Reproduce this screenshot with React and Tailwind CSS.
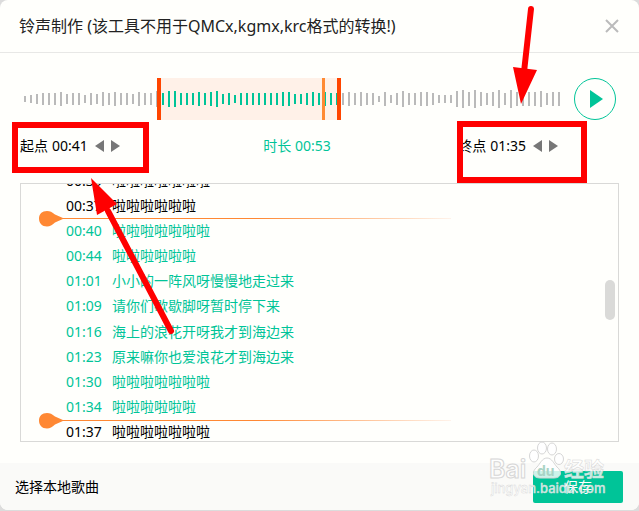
import React, { useState } from 'react';

const BARS = [
  6, 8, 10, 12, 12, 12, 14, 10, 12, 12, 8, 12, 10, 14, 12, 14, 12, 12, 10, 14, 12, 12, 16, 12, 16, 16, 12, 12, 12, 14,
  12, 14, 16, 10, 12, 8, 12, 12, 12, 12, 12, 12, 12, 14, 14, 10, 10, 12, 14, 12, 14, 12, 12, 12, 14, 12, 14, 12, 12, 6,
  14, 8, 12, 16, 12, 12, 14, 14, 12, 8, 8, 8, 16, 18, 14, 18, 14, 12, 14, 18, 12, 18, 14, 14, 14, 14, 16, 12, 14, 14,
];

const LYRICS = [
  { time: '00:35', text: '啦啦啦啦啦啦啦', inside: false },
  { time: '00:37', text: '啦啦啦啦啦啦', inside: false },
  { time: '00:40', text: '啦啦啦啦啦啦啦', inside: true },
  { time: '00:44', text: '啦啦啦啦啦啦', inside: true },
  { time: '01:01', text: '小小的一阵风呀慢慢地走过来', inside: true },
  { time: '01:09', text: '请你们歇歇脚呀暂时停下来', inside: true },
  { time: '01:16', text: '海上的浪花开呀我才到海边来', inside: true },
  { time: '01:23', text: '原来嘛你也爱浪花才到海边来', inside: true },
  { time: '01:30', text: '啦啦啦啦啦啦啦', inside: true },
  { time: '01:34', text: '啦啦啦啦啦啦', inside: true },
  { time: '01:37', text: '啦啦啦啦啦啦啦', inside: false },
];

function Waveform() {
  return (
    <svg className="block h-[42px] w-[540px] shrink-0" viewBox="24 78 540 42">
      <rect x="157" y="78" width="184" height="42" fill="#fff1e8" />
      {BARS.map((h, i) => {
        const x = 24 + i * 6;
        return <rect key={i} x={x} y={99 - h / 2} width="2" height={h} fill={x > 160 && x < 340 ? '#00c498' : '#bababa'} />;
      })}
      <rect x="157" y="78" width="4" height="42" fill="#ff4500" />
      <rect x="322" y="78" width="3" height="42" fill="#ff8a33" />
      <rect x="337" y="78" width="4" height="42" fill="#ff4500" />
    </svg>
  );
}

function TimePoint({ label, value }) {
  return (
    <div className="flex h-6 items-center gap-[7px]">
      <div className="flex gap-1">
        <span>{label}</span>
        <time>{value}</time>
      </div>
      <button aria-label={label + '减'}>
        <svg className="block h-3 w-[9px]" viewBox="0 0 9 12"><path d="M9 0v12L0 6z" fill="#777" /></svg>
      </button>
      <button aria-label={label + '加'}>
        <svg className="block h-3 w-[9px]" viewBox="0 0 9 12"><path d="M0 0v12l9-6z" fill="#777" /></svg>
      </button>
    </div>
  );
}

function Marker({ className }) {
  return (
    <svg className={'absolute left-[18px] h-4 w-[412px] ' + className} viewBox="0 0 412 16">
      <defs>
        <linearGradient id="fade">
          <stop offset="0.5" stopColor="#ff8833" />
          <stop offset="1" stopColor="#fff3ea" />
        </linearGradient>
      </defs>
      <rect x="22" y="7" width="390" height="1" fill="url(#fade)" />
      <path d="M8 0C3 0 0 3 0 7.500S3 15.500 8 15.500c3 0 5-1.500 8-4L25 7.500 16 3.500C13 1 11 0 8 0z" fill="#ff8833" />
    </svg>
  );
}

function Watermark() {
  return (
    <div className="pointer-events-none absolute right-[30px] bottom-[11px] h-[58px] w-[122px]">
      <svg className="h-full w-full" viewBox="0 0 122 58" fontFamily="Inter, Noto Sans CJK SC, sans-serif">
        <g fill="#fff" fillOpacity="0.8" stroke="#d6d6d6" strokeWidth="1">
          <text x="2" y="37" fontSize="25" fontWeight="600">Bai</text>
          <ellipse cx="47" cy="15" rx="4.500" ry="6" />
          <ellipse cx="55" cy="7" rx="4.500" ry="6" />
          <ellipse cx="65" cy="8" rx="4.500" ry="6" />
          <ellipse cx="72" cy="18" rx="4.500" ry="5.500" />
          <path d="M60 17c5 0 7 6 10 9 6 5 4 11-3 11H53c-7 0-9-6-3-11 3-3 5-9 10-9z" />
        </g>
        <text x="50" y="35" fontSize="14" fontWeight="700" fill="#a9d3c5">du</text>
        <text x="77" y="36" fontSize="20" fontWeight="700" fill="#fff" fillOpacity="0.8" stroke="#d6d6d6" strokeWidth="0.5">经验</text>
        <text x="4" y="52" fontSize="13" fontWeight="500" fill="#fff" fillOpacity="0.8" stroke="#d6d6d6" strokeWidth="0.4">jingyan.baidu.com</text>
      </svg>
    </div>
  );
}

export default function App() {
  const [playing, setPlaying] = useState(false);

  return (
    <div className="bg-[#dcdcdc] pb-px font-['Noto_Sans','Noto_Sans_CJK_SC',sans-serif] text-sm text-black">
      <main className="relative overflow-hidden rounded-lg bg-[#fffffc]">
        <header className="flex h-[53px] items-center justify-between border-b border-[#e8e8e6] px-[19px]">
          <h1 className="text-base text-[#222]">铃声制作 (该工具不用于QMCx,kgmx,krc格式的转换!)</h1>
          <button aria-label="关闭">
            <svg className="h-4 w-4" viewBox="0 0 16 16"><path d="M2 2l12 12M14 2L2 14" stroke="#bbb" strokeWidth="2" /></svg>
          </button>
        </header>

        <section className="flex items-center justify-between pt-[25px] pr-[23px] pl-6">
          <Waveform />
          <button aria-label="播放" onClick={() => setPlaying(!playing)}>
            <svg className="block h-[42px] w-[42px]" viewBox="0 0 42 42">
              <circle cx="21" cy="21" r="20.500" fill="none" stroke="#00c498" />
              <path d="M16 12v18l13-9z" fill="#00c498" />
            </svg>
          </button>
        </section>

        <section className="flex items-center pt-[14px] pr-[81px] pl-5">
          <TimePoint label="起点" value="00:41" />
          <div className="flex-1 pl-4 text-center text-[#00c498]">时长 <time>00:53</time></div>
          <TimePoint label="终点" value="01:35" />
        </section>

        <section className="relative mx-5 mt-[25px] h-[259px] overflow-hidden border border-[#d9d9d7]">
          <ul className="-mt-4 flex h-[277px] flex-col justify-between">
            {LYRICS.map((l) => (
              <li key={l.time} className={'flex h-[25px] items-center pl-[45px] ' + (l.inside ? 'text-[#00c498]' : 'text-black')}>
                <time className="w-[46px]">{l.time}</time>
                <span>{l.text}</span>
              </li>
            ))}
          </ul>
          <Marker className="top-[27px]" />
          <Marker className="top-[229px]" />
          <div className="absolute top-24 right-[3px] h-10 w-2.5 rounded-full bg-[#dadad8]" />
        </section>

        <footer className="mt-[21px] flex h-[47px] items-center justify-between bg-[#fafaf8] pr-4 pl-[15px]">
          <button>选择本地歌曲</button>
          <button className="h-8 w-[90px] rounded-xs bg-[#00c498] text-white">保存</button>
        </footer>
        <Watermark />

        <svg className="pointer-events-none absolute top-0 left-0 h-[511px] w-[639px]" viewBox="0 0 639 511">
          <g fill="none" stroke="red" strokeWidth="6">
            <rect x="15" y="125" width="131" height="45" />
            <rect x="460" y="124" width="124" height="56" />
          </g>
          <path d="M531 9L524 72M171 331L108 211" stroke="red" strokeWidth="6" strokeLinecap="round" />
          <path d="M513 67l24 3-16 34zM91 178l26 26-20 11z" fill="red" />
        </svg>
      </main>
    </div>
  );
}
